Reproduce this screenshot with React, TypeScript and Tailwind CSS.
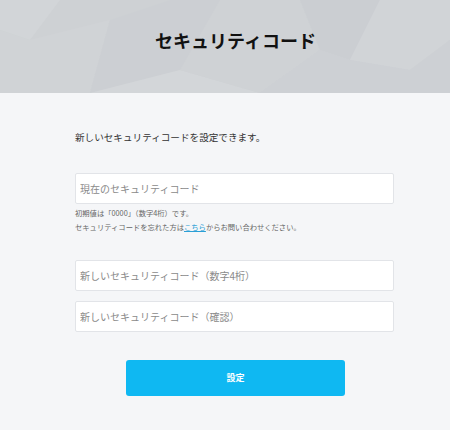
const font = { fontFamily: '"Noto Sans CJK JP", "Noto Sans", sans-serif' };

function HeaderPattern() {
  return (
    <svg className="absolute inset-0 h-full w-full" viewBox="0 0 450 93" preserveAspectRatio="none">
      <rect width="450" height="93" fill="#ced1d4" />
      <polygon points="0,0 60,0 30,40 0,30" fill="#d2d5d8" />
      <polygon points="30,40 110,20 90,93 0,93 0,30" fill="#d0d3d6" />
      <polygon points="110,20 170,0 220,0 180,70 90,93" fill="#cccfd3" />
      <polygon points="180,70 260,93 90,93" fill="#d3d6d9" />
      <polygon points="220,0 300,0 320,50 260,93 180,70" fill="#cfd2d5" />
      <polygon points="300,0 380,0 350,60 320,50" fill="#cbced2" />
      <polygon points="380,0 450,0 450,40 410,70 350,60" fill="#d1d4d7" />
      <polygon points="320,50 350,60 410,70 450,40 450,93 260,93" fill="#cdd0d4" />
    </svg>
  );
}

function Field({ placeholder }: { placeholder: string }) {
  return (
    <input
      type="text"
      placeholder={placeholder}
      className="block h-[31px] w-full rounded-[2px] border border-[#e2e4e8] bg-white px-[4px] text-[10px] text-[#333] outline-none placeholder:text-[#8a8a8a]"
      style={font}
    />
  );
}

export default function App() {
  return (
    <div className="min-h-[430px] w-full bg-[#f5f6f8]" style={font}>
      <header className="relative h-[93px] w-full overflow-hidden">
        <HeaderPattern />
        <h1 className="relative pl-[155px] pt-[28px] text-[18px] font-bold leading-[24px] text-[#111]">
          セキュリティコード
        </h1>
      </header>

      <main className="ml-[75px] w-[319px] pb-[34px]">
        <p className="mt-[37px] text-[9.6px] leading-[14px] text-[#333]">
          新しいセキュリティコードを設定できます。
        </p>

        <div className="mt-[29px]">
          <Field placeholder="現在のセキュリティコード" />
        </div>

        <div className="mt-[2px] text-[7.3px] leading-[14px] text-[#666]">
          <p>初期値は「0000」（数字4桁）です。</p>
          <p>
            セキュリティコードを忘れた方は
            <a href="#" className="text-[#2a9fd6] underline">
              こちら
            </a>
            からお問い合わせください。
          </p>
        </div>

        <div className="mt-[26px] flex flex-col gap-[10px]">
          <Field placeholder="新しいセキュリティコード（数字4桁）" />
          <Field placeholder="新しいセキュリティコード（確認）" />
        </div>

        <div className="mt-[28px] flex">
          <button
            type="button"
            className="ml-[51px] h-[36px] w-[219px] rounded-[3px] bg-[#0fb8f2] text-[9px] font-bold text-white"
            style={font}
          >
            設定
          </button>
        </div>
      </main>
    </div>
  );
}
